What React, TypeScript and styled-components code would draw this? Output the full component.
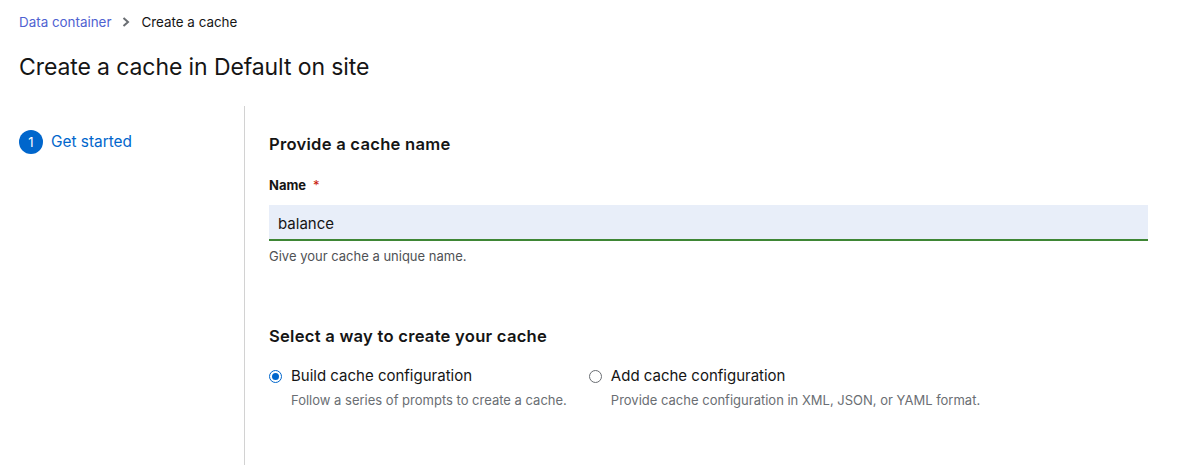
import React from "react";
import styled, { createGlobalStyle } from "styled-components";

const Global = createGlobalStyle`
  html, body { margin: 0; padding: 0; background: #fff; }
  body { font-family: "Inter", "Noto Sans", sans-serif; color: #151515; }
  * { box-sizing: border-box; }
`;

const Page = styled.div`
  display: flex;
  flex-direction: column;
  height: 465px;
  overflow: hidden;
`;

const Header = styled.header`
  padding: 13px 19px 0;
  display: flex;
  flex-direction: column;
`;

const Breadcrumb = styled.nav`
  display: flex;
  align-items: center;
  gap: 11px;
  font-size: 13.4px;
  line-height: 18px;
`;

const Crumb = styled.span<{ $link?: boolean }>`
  color: ${(p) => (p.$link ? "#4f62d1" : "#151515")};
`;

const Chevron = styled.svg`
  width: 8px;
  height: 10px;
  color: #6a6e73;
`;

const Title = styled.h1`
  margin: 21px 0 0;
  font-size: 23px;
  font-weight: 400;
  line-height: 30px;
  letter-spacing: -0.1px;
`;

const Wizard = styled.div`
  margin-top: 24px;
  flex: 1;
  display: flex;
  min-height: 0;
`;

const Nav = styled.aside`
  width: 245px;
  flex-shrink: 0;
  border-right: 1px solid #d2d2d2;
  padding: 24px 19px;
`;

const Step = styled.div`
  display: flex;
  align-items: center;
  gap: 8px;
  color: #0066cc;
  font-size: 15.4px;
  line-height: 24px;
`;

const StepNum = styled.span`
  width: 24px;
  height: 24px;
  border-radius: 50%;
  background: #0066cc;
  color: #fff;
  font-size: 13px;
  display: flex;
  align-items: center;
  justify-content: center;
`;

const Main = styled.main`
  flex: 1;
  padding: 26px 30px 0 24px;
  display: flex;
  flex-direction: column;
`;

const SectionTitle = styled.h2<{ $top?: number }>`
  margin: ${(p) => p.$top ?? 0}px 0 0;
  font-size: 16.6px;
  font-weight: 600;
  line-height: 24px;
  letter-spacing: 0.25px;
`;

const Label = styled.label`
  margin-top: 20px;
  font-size: 13px;
  font-weight: 700;
  line-height: 18px;
  display: flex;
  gap: 7px;
`;

const Required = styled.span`
  color: #c9190b;
  font-weight: 400;
`;

const Input = styled.input`
  margin-top: 11px;
  height: 36px;
  width: 100%;
  border: none;
  border-bottom: 2px solid #3e8635;
  background: #e8eef9;
  padding: 2px 9px 0;
  font-family: inherit;
  font-size: 15px;
  color: #151515;
  outline: none;
`;

const Helper = styled.div`
  margin-top: 6px;
  font-size: 13px;
  line-height: 18px;
  color: #4f5255;
`;

const Options = styled.div`
  margin-top: 18px;
  display: flex;
  gap: 22px;
`;

const Option = styled.div`
  display: grid;
  grid-template-columns: 13px auto;
  column-gap: 9px;
  row-gap: 5px;
  align-items: center;
`;

const Radio = styled.span<{ $checked?: boolean }>`
  width: 13px;
  height: 13px;
  border-radius: 50%;
  border: 1px solid ${(p) => (p.$checked ? "#0066cc" : "#6a6e73")};
  display: flex;
  align-items: center;
  justify-content: center;
  &::after {
    content: "";
    display: ${(p) => (p.$checked ? "block" : "none")};
    width: 7px;
    height: 7px;
    border-radius: 50%;
    background: #0066cc;
  }
`;

const OptionLabel = styled.span`
  font-size: 15px;
  line-height: 20px;
  color: #151515;
`;

const OptionDesc = styled.span`
  grid-column: 2;
  font-size: 13px;
  line-height: 18px;
  color: #6a6e73;
`;

export default function App() {
  return (
    <>
      <Global />
      <Page>
        <Header>
          <Breadcrumb>
            <Crumb $link>Data container</Crumb>
            <Chevron viewBox="0 0 8 10">
              <path d="M1.5 1 L6 5 L1.5 9" fill="none" stroke="currentColor" strokeWidth="2" />
            </Chevron>
            <Crumb>Create a cache</Crumb>
          </Breadcrumb>
          <Title>Create a cache in Default on site</Title>
        </Header>
        <Wizard>
          <Nav>
            <Step>
              <StepNum>1</StepNum>
              Get started
            </Step>
          </Nav>
          <Main>
            <SectionTitle>Provide a cache name</SectionTitle>
            <Label>
              Name <Required>*</Required>
            </Label>
            <Input defaultValue="balance" />
            <Helper>Give your cache a unique name.</Helper>
            <SectionTitle $top={59}>Select a way to create your cache</SectionTitle>
            <Options>
              <Option>
                <Radio $checked />
                <OptionLabel>Build cache configuration</OptionLabel>
                <OptionDesc>Follow a series of prompts to create a cache.</OptionDesc>
              </Option>
              <Option>
                <Radio />
                <OptionLabel>Add cache configuration</OptionLabel>
                <OptionDesc>Provide cache configuration in XML, JSON, or YAML format.</OptionDesc>
              </Option>
            </Options>
          </Main>
        </Wizard>
      </Page>
    </>
  );
}
